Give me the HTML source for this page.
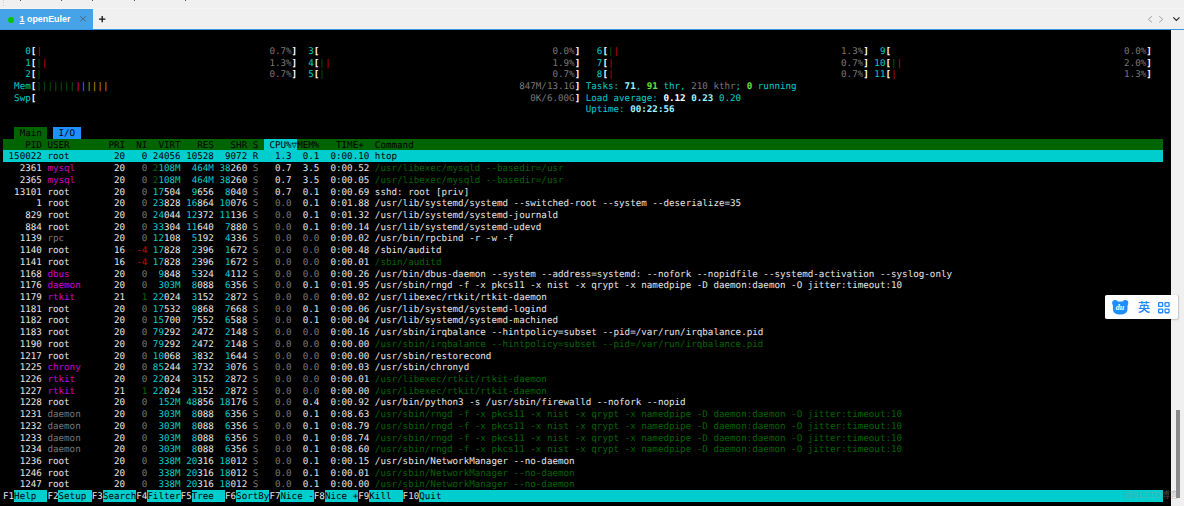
<!DOCTYPE html>
<html lang="en"><head><meta charset="utf-8"><title>htop - openEuler</title>
<style>
html,body{margin:0;padding:0;}
body{width:1184px;height:506px;overflow:hidden;background:#f0f0f0;position:relative;font-family:"Liberation Sans","Noto Sans CJK SC",sans-serif;}
#term{position:absolute;left:0;top:30.3px;width:1171px;height:475.7px;background:#000;overflow:hidden;text-rendering:geometricPrecision;}
#term i,#term b,#term s{position:absolute;display:block;font-style:normal;text-decoration:none;}
#term s{height:11.72px;}
#term i,#term b{font-family:"DejaVu Sans Mono","Liberation Mono",monospace;font-size:9.22px;line-height:11.72px;height:11.72px;white-space:pre;font-weight:normal;color:#e5e5e5;}
#term b{font-weight:bold;}
#term .c0{color:#00cdcd;}
#term .c1{color:#ffffff;}
#term .c2{color:#cd0000;}
#term .c3{color:#777777;}
#term .c4{color:#006400;}
#term .c5{color:#cd00cd;}
#term .c6{color:#1e90ff;}
#term .c7{color:#cd9b00;}
#term .c8{color:#98f5ff;}
#term .c9{color:#66e040;}
#term .c10{color:#000000;}
#topline{position:absolute;left:0;top:7.5px;width:1184px;height:0.9px;background:#f6f5f3;}
#tab{position:absolute;left:0;top:8.6px;width:92.9px;height:20.6px;background:#47a3e8;}
#dot{position:absolute;left:7.7px;top:8px;width:6.4px;height:6.4px;border-radius:50%;background:#08c408;}
#tabtxt{position:absolute;left:19.6px;top:5.4px;font-size:8.9px;line-height:11px;font-weight:bold;color:#fff;white-space:pre;}
#tabtxt u{text-decoration:underline;}
#blueline{position:absolute;left:0;top:29.1px;width:1184px;height:1.2px;background:#3c96df;}
#gutter{position:absolute;left:1171px;top:30.3px;width:13px;height:475.7px;background:#f0f0f0;}
#thumb{position:absolute;left:1176.2px;top:409.7px;width:3.8px;height:88.5px;background:#8c8c8c;}
svg{position:absolute;overflow:visible;}
#ime{position:absolute;left:1104.8px;top:295.1px;width:73.6px;height:23.8px;background:#fff;border-radius:1.8px;box-shadow:0.5px 0.5px 1.5px rgba(0,0,0,0.18);}
#imeying{position:absolute;left:33.2px;top:4.6px;font-size:12.2px;line-height:14px;font-weight:500;color:#1f86ff;font-family:"Noto Sans CJK SC","Liberation Sans",sans-serif;}
#wm{position:absolute;left:1123.4px;top:489.2px;font-size:9px;line-height:13px;color:rgba(150,150,150,0.5);white-space:pre;letter-spacing:-0.1px;font-family:"Liberation Sans","Noto Sans CJK SC",sans-serif;}
#grip{position:absolute;left:2.6px;top:0;width:1px;height:6px;background:repeating-linear-gradient(to bottom,#cfcfcf 0,#cfcfcf 1px,transparent 1px,transparent 2.4px);}
.mk{position:absolute;top:0;width:1.2px;height:0.9px;background:#555;}
</style></head><body>
<div id="topline"></div><div id="grip"></div><div class="mk" style="left:20px"></div><div class="mk" style="left:61px"></div><div class="mk" style="left:92px"></div><div class="mk" style="left:134px"></div><div class="mk" style="left:184.5px"></div>
<div id="tab"><div id="dot"></div><div id="tabtxt"><u>1</u> openEuler</div>
<svg style="left:80px;top:7.6px" width="6.2" height="5.6" viewBox="0 0 6.2 5.6"><path d="M0.2 0.2 L6 5.4 M6 0.2 L0.2 5.4" stroke="#4b5a68" stroke-width="0.8" fill="none"/></svg>
</div>
<svg style="left:99.1px;top:16px" width="6.4" height="6.2" viewBox="0 0 6.4 6.2"><path d="M3.2 0 V6.2 M0 3.1 H6.4" stroke="#111" stroke-width="1.3" fill="none"/></svg>
<svg style="left:1147.5px;top:16px" width="4.2" height="6.6" viewBox="0 0 4.2 6.6"><path d="M4 0.2 L0.4 3.3 L4 6.4" stroke="#9a9a9a" stroke-width="0.9" fill="none"/></svg>
<svg style="left:1159px;top:16px" width="4.2" height="6.6" viewBox="0 0 4.2 6.6"><path d="M0.2 0.2 L3.8 3.3 L0.2 6.4" stroke="#9a9a9a" stroke-width="0.9" fill="none"/></svg>
<svg style="left:1173px;top:17.2px" width="6.8" height="4" viewBox="0 0 6.8 4"><path d="M0.3 0.3 L3.4 3.4 L6.5 0.3" stroke="#2a2a2a" stroke-width="1.2" fill="none"/></svg>
<div id="blueline"></div>
<div id="gutter"></div><div id="thumb"></div>
<div id="term">
<s style="left:14.1px;top:96.73px;width:33.3px;background:#006400"></s>
<s style="left:52.95px;top:96.73px;width:27.75px;background:#1e90ff"></s>
<s style="left:3px;top:108.45px;width:1159.95px;background:#006400"></s>
<s style="left:263.85px;top:108.45px;width:33.3px;background:#00cdcd"></s>
<s style="left:3px;top:120.17px;width:1159.95px;background:#00cdcd"></s>
<s style="left:3px;top:459.95px;width:1159.95px;background:#00cdcd"></s>
<s style="left:3px;top:459.95px;width:11.1px;background:#000000"></s>
<s style="left:47.4px;top:459.95px;width:11.1px;background:#000000"></s>
<s style="left:91.8px;top:459.95px;width:11.1px;background:#000000"></s>
<s style="left:136.2px;top:459.95px;width:11.1px;background:#000000"></s>
<s style="left:180.6px;top:459.95px;width:11.1px;background:#000000"></s>
<s style="left:225px;top:459.95px;width:11.1px;background:#000000"></s>
<s style="left:269.4px;top:459.95px;width:11.1px;background:#000000"></s>
<s style="left:313.8px;top:459.95px;width:11.1px;background:#000000"></s>
<s style="left:358.2px;top:459.95px;width:11.1px;background:#000000"></s>
<s style="left:402.6px;top:459.95px;width:16.65px;background:#000000"></s>
<i class="c0" style="left:14.1px;top:15.62px">  0</i>
<b class="c1" style="left:30.75px;top:15.62px">[</b>
<i class="c2" style="left:36.3px;top:15.62px">|</i>
<i class="c3" style="left:269.4px;top:15.62px">0.7%</i>
<b class="c1" style="left:291.6px;top:15.62px">]</b>
<i class="c0" style="left:14.1px;top:27.33px">  1</i>
<b class="c1" style="left:30.75px;top:27.33px">[</b>
<i class="c4" style="left:36.3px;top:27.33px">|</i>
<i class="c2" style="left:41.85px;top:27.33px">|</i>
<i class="c3" style="left:269.4px;top:27.33px">1.3%</i>
<b class="c1" style="left:291.6px;top:27.33px">]</b>
<i class="c0" style="left:14.1px;top:39.05px">  2</i>
<b class="c1" style="left:30.75px;top:39.05px">[</b>
<i class="c4" style="left:36.3px;top:39.05px">|</i>
<i class="c3" style="left:269.4px;top:39.05px">0.7%</i>
<b class="c1" style="left:291.6px;top:39.05px">]</b>
<i class="c0" style="left:297.15px;top:15.62px">  3</i>
<b class="c1" style="left:313.8px;top:15.62px">[</b>
<i class="c3" style="left:552.45px;top:15.62px">0.0%</i>
<b class="c1" style="left:574.65px;top:15.62px">]</b>
<i class="c0" style="left:297.15px;top:27.33px">  4</i>
<b class="c1" style="left:313.8px;top:27.33px">[</b>
<i class="c4" style="left:319.35px;top:27.33px">|</i>
<i class="c2" style="left:324.9px;top:27.33px">|</i>
<i class="c3" style="left:552.45px;top:27.33px">1.9%</i>
<b class="c1" style="left:574.65px;top:27.33px">]</b>
<i class="c0" style="left:297.15px;top:39.05px">  5</i>
<b class="c1" style="left:313.8px;top:39.05px">[</b>
<i class="c4" style="left:319.35px;top:39.05px">|</i>
<i class="c3" style="left:552.45px;top:39.05px">0.7%</i>
<b class="c1" style="left:574.65px;top:39.05px">]</b>
<i class="c0" style="left:585.75px;top:15.62px">  6</i>
<b class="c1" style="left:602.4px;top:15.62px">[</b>
<i class="c4" style="left:607.95px;top:15.62px">|</i>
<i class="c2" style="left:613.5px;top:15.62px">|</i>
<i class="c3" style="left:841.05px;top:15.62px">1.3%</i>
<b class="c1" style="left:863.25px;top:15.62px">]</b>
<i class="c0" style="left:585.75px;top:27.33px">  7</i>
<b class="c1" style="left:602.4px;top:27.33px">[</b>
<i class="c2" style="left:607.95px;top:27.33px">|</i>
<i class="c3" style="left:841.05px;top:27.33px">0.7%</i>
<b class="c1" style="left:863.25px;top:27.33px">]</b>
<i class="c0" style="left:585.75px;top:39.05px">  8</i>
<b class="c1" style="left:602.4px;top:39.05px">[</b>
<i class="c2" style="left:607.95px;top:39.05px">|</i>
<i class="c3" style="left:841.05px;top:39.05px">0.7%</i>
<b class="c1" style="left:863.25px;top:39.05px">]</b>
<i class="c0" style="left:868.8px;top:15.62px">  9</i>
<b class="c1" style="left:885.45px;top:15.62px">[</b>
<i class="c3" style="left:1124.1px;top:15.62px">0.0%</i>
<b class="c1" style="left:1146.3px;top:15.62px">]</b>
<i class="c0" style="left:868.8px;top:27.33px"> 10</i>
<b class="c1" style="left:885.45px;top:27.33px">[</b>
<i class="c4" style="left:891px;top:27.33px">|</i>
<i class="c2" style="left:896.55px;top:27.33px">|</i>
<i class="c3" style="left:1124.1px;top:27.33px">2.0%</i>
<b class="c1" style="left:1146.3px;top:27.33px">]</b>
<i class="c0" style="left:868.8px;top:39.05px"> 11</i>
<b class="c1" style="left:885.45px;top:39.05px">[</b>
<i class="c2" style="left:891px;top:39.05px">|</i>
<i class="c3" style="left:1124.1px;top:39.05px">1.3%</i>
<b class="c1" style="left:1146.3px;top:39.05px">]</b>
<i class="c0" style="left:14.1px;top:50.77px">Mem</i>
<b class="c1" style="left:30.75px;top:50.77px">[</b>
<i class="c4" style="left:36.3px;top:50.77px">|||||||</i>
<i class="c5" style="left:75.15px;top:50.77px">|</i>
<i class="c6" style="left:80.7px;top:50.77px">|</i>
<i class="c7" style="left:86.25px;top:50.77px">||||</i>
<i class="c3" style="left:519.15px;top:50.77px">847M/13.1G</i>
<b class="c1" style="left:574.65px;top:50.77px">]</b>
<i class="c0" style="left:14.1px;top:62.48px">Swp</i>
<b class="c1" style="left:30.75px;top:62.48px">[</b>
<i class="c3" style="left:530.25px;top:62.48px">0K/6.00G</i>
<b class="c1" style="left:574.65px;top:62.48px">]</b>
<i class="c0" style="left:585.75px;top:50.77px">Tasks: </i>
<b class="c8" style="left:624.6px;top:50.77px">71</b>
<i class="c0" style="left:635.7px;top:50.77px">, </i>
<b class="c9" style="left:646.8px;top:50.77px">91</b>
<i class="c0" style="left:657.9px;top:50.77px"> thr</i>
<i class="c0" style="left:680.1px;top:50.77px">, </i>
<i class="c3" style="left:691.2px;top:50.77px">210 kthr</i>
<i class="c0" style="left:735.6px;top:50.77px">; </i>
<b class="c9" style="left:746.7px;top:50.77px">0</b>
<i class="c0" style="left:752.25px;top:50.77px"> running</i>
<i class="c0" style="left:585.75px;top:62.48px">Load average: </i>
<b class="c1" style="left:663.45px;top:62.48px">0.12 </b>
<b class="c8" style="left:691.2px;top:62.48px">0.23 </b>
<i class="c0" style="left:718.95px;top:62.48px">0.20</i>
<i class="c0" style="left:585.75px;top:74.2px">Uptime: </i>
<b class="c8" style="left:630.15px;top:74.2px">00:22:56</b>
<i class="c10" style="left:14.1px;top:97.63px"> Main </i>
<i class="c10" style="left:52.95px;top:97.63px"> I/O </i>
<i class="c10" style="left:3px;top:109.35px">    PID USER       PRI  NI  VIRT   RES   SHR S </i>
<i class="c10" style="left:263.85px;top:109.35px"> CPU%▽</i>
<i class="c10" style="left:297.15px;top:109.35px">MEM%   TIME+  Command</i>
<i class="c10" style="left:3px;top:121.07px"> 150022</i>
<i class="c10" style="left:47.4px;top:121.07px">root</i>
<i class="c10" style="left:108.45px;top:121.07px"> 20</i>
<i class="c10" style="left:141.75px;top:121.07px">0</i>
<i class="c10" style="left:152.85px;top:121.07px">24056</i>
<i class="c10" style="left:186.15px;top:121.07px">10528</i>
<i class="c10" style="left:225px;top:121.07px">9072</i>
<i class="c10" style="left:252.75px;top:121.07px">R</i>
<i class="c10" style="left:274.95px;top:121.07px">1.3</i>
<i class="c10" style="left:302.7px;top:121.07px">0.1</i>
<i class="c10" style="left:330.45px;top:121.07px">0:00.10</i>
<i class="c10" style="left:374.85px;top:121.07px">htop</i>
<i style="left:3px;top:132.78px">   2361</i>
<i class="c5" style="left:47.4px;top:132.78px">mysql</i>
<i style="left:108.45px;top:132.78px"> 20</i>
<i class="c3" style="left:141.75px;top:132.78px">0</i>
<i class="c4" style="left:152.85px;top:132.78px">2</i>
<i class="c0" style="left:158.4px;top:132.78px">108M</i>
<i class="c0" style="left:191.7px;top:132.78px">464M</i>
<i class="c0" style="left:219.45px;top:132.78px">38</i>
<i style="left:230.55px;top:132.78px">260</i>
<i class="c3" style="left:252.75px;top:132.78px">S</i>
<i style="left:274.95px;top:132.78px">0.7</i>
<i style="left:302.7px;top:132.78px">3.5</i>
<i style="left:330.45px;top:132.78px">0:00.52</i>
<i class="c4" style="left:374.85px;top:132.78px">/usr/libexec/mysqld --basedir=/usr</i>
<i style="left:3px;top:144.5px">   2365</i>
<i class="c5" style="left:47.4px;top:144.5px">mysql</i>
<i style="left:108.45px;top:144.5px"> 20</i>
<i class="c3" style="left:141.75px;top:144.5px">0</i>
<i class="c4" style="left:152.85px;top:144.5px">2</i>
<i class="c0" style="left:158.4px;top:144.5px">108M</i>
<i class="c0" style="left:191.7px;top:144.5px">464M</i>
<i class="c0" style="left:219.45px;top:144.5px">38</i>
<i style="left:230.55px;top:144.5px">260</i>
<i class="c3" style="left:252.75px;top:144.5px">S</i>
<i style="left:274.95px;top:144.5px">0.7</i>
<i style="left:302.7px;top:144.5px">3.5</i>
<i style="left:330.45px;top:144.5px">0:00.05</i>
<i class="c4" style="left:374.85px;top:144.5px">/usr/libexec/mysqld --basedir=/usr</i>
<i style="left:3px;top:156.22px">  13101</i>
<i style="left:47.4px;top:156.22px">root</i>
<i style="left:108.45px;top:156.22px"> 20</i>
<i class="c3" style="left:141.75px;top:156.22px">0</i>
<i class="c0" style="left:152.85px;top:156.22px">17</i>
<i style="left:163.95px;top:156.22px">504</i>
<i class="c0" style="left:191.7px;top:156.22px">9</i>
<i style="left:197.25px;top:156.22px">656</i>
<i class="c0" style="left:225px;top:156.22px">8</i>
<i style="left:230.55px;top:156.22px">040</i>
<i class="c3" style="left:252.75px;top:156.22px">S</i>
<i style="left:274.95px;top:156.22px">0.7</i>
<i style="left:302.7px;top:156.22px">0.1</i>
<i style="left:330.45px;top:156.22px">0:00.69</i>
<i style="left:374.85px;top:156.22px">sshd: root [priv]</i>
<i style="left:3px;top:167.93px">      1</i>
<i style="left:47.4px;top:167.93px">root</i>
<i style="left:108.45px;top:167.93px"> 20</i>
<i class="c3" style="left:141.75px;top:167.93px">0</i>
<i class="c0" style="left:152.85px;top:167.93px">23</i>
<i style="left:163.95px;top:167.93px">828</i>
<i class="c0" style="left:186.15px;top:167.93px">16</i>
<i style="left:197.25px;top:167.93px">864</i>
<i class="c0" style="left:219.45px;top:167.93px">10</i>
<i style="left:230.55px;top:167.93px">076</i>
<i class="c3" style="left:252.75px;top:167.93px">S</i>
<i class="c3" style="left:274.95px;top:167.93px">0.0</i>
<i style="left:302.7px;top:167.93px">0.1</i>
<i style="left:330.45px;top:167.93px">0:01.88</i>
<i style="left:374.85px;top:167.93px">/usr/lib/systemd/systemd --switched-root --system --deserialize=35</i>
<i style="left:3px;top:179.65px">    829</i>
<i style="left:47.4px;top:179.65px">root</i>
<i style="left:108.45px;top:179.65px"> 20</i>
<i class="c3" style="left:141.75px;top:179.65px">0</i>
<i class="c0" style="left:152.85px;top:179.65px">24</i>
<i style="left:163.95px;top:179.65px">044</i>
<i class="c0" style="left:186.15px;top:179.65px">12</i>
<i style="left:197.25px;top:179.65px">372</i>
<i class="c0" style="left:219.45px;top:179.65px">11</i>
<i style="left:230.55px;top:179.65px">136</i>
<i class="c3" style="left:252.75px;top:179.65px">S</i>
<i class="c3" style="left:274.95px;top:179.65px">0.0</i>
<i style="left:302.7px;top:179.65px">0.1</i>
<i style="left:330.45px;top:179.65px">0:01.32</i>
<i style="left:374.85px;top:179.65px">/usr/lib/systemd/systemd-journald</i>
<i style="left:3px;top:191.37px">    884</i>
<i style="left:47.4px;top:191.37px">root</i>
<i style="left:108.45px;top:191.37px"> 20</i>
<i class="c3" style="left:141.75px;top:191.37px">0</i>
<i class="c0" style="left:152.85px;top:191.37px">33</i>
<i style="left:163.95px;top:191.37px">304</i>
<i class="c0" style="left:186.15px;top:191.37px">11</i>
<i style="left:197.25px;top:191.37px">640</i>
<i class="c0" style="left:225px;top:191.37px">7</i>
<i style="left:230.55px;top:191.37px">880</i>
<i class="c3" style="left:252.75px;top:191.37px">S</i>
<i class="c3" style="left:274.95px;top:191.37px">0.0</i>
<i style="left:302.7px;top:191.37px">0.1</i>
<i style="left:330.45px;top:191.37px">0:00.14</i>
<i style="left:374.85px;top:191.37px">/usr/lib/systemd/systemd-udevd</i>
<i style="left:3px;top:203.08px">   1139</i>
<i class="c3" style="left:47.4px;top:203.08px">rpc</i>
<i style="left:108.45px;top:203.08px"> 20</i>
<i class="c3" style="left:141.75px;top:203.08px">0</i>
<i class="c0" style="left:152.85px;top:203.08px">12</i>
<i style="left:163.95px;top:203.08px">108</i>
<i class="c0" style="left:191.7px;top:203.08px">5</i>
<i style="left:197.25px;top:203.08px">192</i>
<i class="c0" style="left:225px;top:203.08px">4</i>
<i style="left:230.55px;top:203.08px">336</i>
<i class="c3" style="left:252.75px;top:203.08px">S</i>
<i class="c3" style="left:274.95px;top:203.08px">0.0</i>
<i class="c3" style="left:302.7px;top:203.08px">0.0</i>
<i style="left:330.45px;top:203.08px">0:00.02</i>
<i style="left:374.85px;top:203.08px">/usr/bin/rpcbind -r -w -f</i>
<i style="left:3px;top:214.8px">   1140</i>
<i style="left:47.4px;top:214.8px">root</i>
<i style="left:108.45px;top:214.8px"> 16</i>
<i class="c2" style="left:136.2px;top:214.8px">-4</i>
<i class="c0" style="left:152.85px;top:214.8px">17</i>
<i style="left:163.95px;top:214.8px">828</i>
<i class="c0" style="left:191.7px;top:214.8px">2</i>
<i style="left:197.25px;top:214.8px">396</i>
<i class="c0" style="left:225px;top:214.8px">1</i>
<i style="left:230.55px;top:214.8px">672</i>
<i class="c3" style="left:252.75px;top:214.8px">S</i>
<i class="c3" style="left:274.95px;top:214.8px">0.0</i>
<i class="c3" style="left:302.7px;top:214.8px">0.0</i>
<i style="left:330.45px;top:214.8px">0:00.48</i>
<i style="left:374.85px;top:214.8px">/sbin/auditd</i>
<i style="left:3px;top:226.52px">   1141</i>
<i style="left:47.4px;top:226.52px">root</i>
<i style="left:108.45px;top:226.52px"> 16</i>
<i class="c2" style="left:136.2px;top:226.52px">-4</i>
<i class="c0" style="left:152.85px;top:226.52px">17</i>
<i style="left:163.95px;top:226.52px">828</i>
<i class="c0" style="left:191.7px;top:226.52px">2</i>
<i style="left:197.25px;top:226.52px">396</i>
<i class="c0" style="left:225px;top:226.52px">1</i>
<i style="left:230.55px;top:226.52px">672</i>
<i class="c3" style="left:252.75px;top:226.52px">S</i>
<i class="c3" style="left:274.95px;top:226.52px">0.0</i>
<i class="c3" style="left:302.7px;top:226.52px">0.0</i>
<i style="left:330.45px;top:226.52px">0:00.01</i>
<i class="c4" style="left:374.85px;top:226.52px">/sbin/auditd</i>
<i style="left:3px;top:238.23px">   1168</i>
<i class="c5" style="left:47.4px;top:238.23px">dbus</i>
<i style="left:108.45px;top:238.23px"> 20</i>
<i class="c3" style="left:141.75px;top:238.23px">0</i>
<i class="c0" style="left:158.4px;top:238.23px">9</i>
<i style="left:163.95px;top:238.23px">848</i>
<i class="c0" style="left:191.7px;top:238.23px">5</i>
<i style="left:197.25px;top:238.23px">324</i>
<i class="c0" style="left:225px;top:238.23px">4</i>
<i style="left:230.55px;top:238.23px">112</i>
<i class="c3" style="left:252.75px;top:238.23px">S</i>
<i class="c3" style="left:274.95px;top:238.23px">0.0</i>
<i class="c3" style="left:302.7px;top:238.23px">0.0</i>
<i style="left:330.45px;top:238.23px">0:00.26</i>
<i style="left:374.85px;top:238.23px">/usr/bin/dbus-daemon --system --address=systemd: --nofork --nopidfile --systemd-activation --syslog-only</i>
<i style="left:3px;top:249.95px">   1176</i>
<i class="c5" style="left:47.4px;top:249.95px">daemon</i>
<i style="left:108.45px;top:249.95px"> 20</i>
<i class="c3" style="left:141.75px;top:249.95px">0</i>
<i class="c0" style="left:158.4px;top:249.95px">303M</i>
<i class="c0" style="left:191.7px;top:249.95px">8</i>
<i style="left:197.25px;top:249.95px">088</i>
<i class="c0" style="left:225px;top:249.95px">6</i>
<i style="left:230.55px;top:249.95px">356</i>
<i class="c3" style="left:252.75px;top:249.95px">S</i>
<i class="c3" style="left:274.95px;top:249.95px">0.0</i>
<i style="left:302.7px;top:249.95px">0.1</i>
<i style="left:330.45px;top:249.95px">0:01.95</i>
<i style="left:374.85px;top:249.95px">/usr/sbin/rngd -f -x pkcs11 -x nist -x qrypt -x namedpipe -D daemon:daemon -O jitter:timeout:10</i>
<i style="left:3px;top:261.67px">   1179</i>
<i class="c5" style="left:47.4px;top:261.67px">rtkit</i>
<i style="left:108.45px;top:261.67px"> 21</i>
<i class="c4" style="left:141.75px;top:261.67px">1</i>
<i class="c0" style="left:152.85px;top:261.67px">22</i>
<i style="left:163.95px;top:261.67px">024</i>
<i class="c0" style="left:191.7px;top:261.67px">3</i>
<i style="left:197.25px;top:261.67px">152</i>
<i class="c0" style="left:225px;top:261.67px">2</i>
<i style="left:230.55px;top:261.67px">872</i>
<i class="c3" style="left:252.75px;top:261.67px">S</i>
<i class="c3" style="left:274.95px;top:261.67px">0.0</i>
<i class="c3" style="left:302.7px;top:261.67px">0.0</i>
<i style="left:330.45px;top:261.67px">0:00.02</i>
<i style="left:374.85px;top:261.67px">/usr/libexec/rtkit/rtkit-daemon</i>
<i style="left:3px;top:273.38px">   1181</i>
<i style="left:47.4px;top:273.38px">root</i>
<i style="left:108.45px;top:273.38px"> 20</i>
<i class="c3" style="left:141.75px;top:273.38px">0</i>
<i class="c0" style="left:152.85px;top:273.38px">17</i>
<i style="left:163.95px;top:273.38px">532</i>
<i class="c0" style="left:191.7px;top:273.38px">9</i>
<i style="left:197.25px;top:273.38px">868</i>
<i class="c0" style="left:225px;top:273.38px">7</i>
<i style="left:230.55px;top:273.38px">668</i>
<i class="c3" style="left:252.75px;top:273.38px">S</i>
<i class="c3" style="left:274.95px;top:273.38px">0.0</i>
<i style="left:302.7px;top:273.38px">0.1</i>
<i style="left:330.45px;top:273.38px">0:00.06</i>
<i style="left:374.85px;top:273.38px">/usr/lib/systemd/systemd-logind</i>
<i style="left:3px;top:285.1px">   1182</i>
<i style="left:47.4px;top:285.1px">root</i>
<i style="left:108.45px;top:285.1px"> 20</i>
<i class="c3" style="left:141.75px;top:285.1px">0</i>
<i class="c0" style="left:152.85px;top:285.1px">15</i>
<i style="left:163.95px;top:285.1px">700</i>
<i class="c0" style="left:191.7px;top:285.1px">7</i>
<i style="left:197.25px;top:285.1px">552</i>
<i class="c0" style="left:225px;top:285.1px">6</i>
<i style="left:230.55px;top:285.1px">588</i>
<i class="c3" style="left:252.75px;top:285.1px">S</i>
<i class="c3" style="left:274.95px;top:285.1px">0.0</i>
<i style="left:302.7px;top:285.1px">0.1</i>
<i style="left:330.45px;top:285.1px">0:00.04</i>
<i style="left:374.85px;top:285.1px">/usr/lib/systemd/systemd-machined</i>
<i style="left:3px;top:296.82px">   1183</i>
<i style="left:47.4px;top:296.82px">root</i>
<i style="left:108.45px;top:296.82px"> 20</i>
<i class="c3" style="left:141.75px;top:296.82px">0</i>
<i class="c0" style="left:152.85px;top:296.82px">79</i>
<i style="left:163.95px;top:296.82px">292</i>
<i class="c0" style="left:191.7px;top:296.82px">2</i>
<i style="left:197.25px;top:296.82px">472</i>
<i class="c0" style="left:225px;top:296.82px">2</i>
<i style="left:230.55px;top:296.82px">148</i>
<i class="c3" style="left:252.75px;top:296.82px">S</i>
<i class="c3" style="left:274.95px;top:296.82px">0.0</i>
<i class="c3" style="left:302.7px;top:296.82px">0.0</i>
<i style="left:330.45px;top:296.82px">0:00.16</i>
<i style="left:374.85px;top:296.82px">/usr/sbin/irqbalance --hintpolicy=subset --pid=/var/run/irqbalance.pid</i>
<i style="left:3px;top:308.53px">   1190</i>
<i style="left:47.4px;top:308.53px">root</i>
<i style="left:108.45px;top:308.53px"> 20</i>
<i class="c3" style="left:141.75px;top:308.53px">0</i>
<i class="c0" style="left:152.85px;top:308.53px">79</i>
<i style="left:163.95px;top:308.53px">292</i>
<i class="c0" style="left:191.7px;top:308.53px">2</i>
<i style="left:197.25px;top:308.53px">472</i>
<i class="c0" style="left:225px;top:308.53px">2</i>
<i style="left:230.55px;top:308.53px">148</i>
<i class="c3" style="left:252.75px;top:308.53px">S</i>
<i class="c3" style="left:274.95px;top:308.53px">0.0</i>
<i class="c3" style="left:302.7px;top:308.53px">0.0</i>
<i style="left:330.45px;top:308.53px">0:00.00</i>
<i class="c4" style="left:374.85px;top:308.53px">/usr/sbin/irqbalance --hintpolicy=subset --pid=/var/run/irqbalance.pid</i>
<i style="left:3px;top:320.25px">   1217</i>
<i style="left:47.4px;top:320.25px">root</i>
<i style="left:108.45px;top:320.25px"> 20</i>
<i class="c3" style="left:141.75px;top:320.25px">0</i>
<i class="c0" style="left:152.85px;top:320.25px">10</i>
<i style="left:163.95px;top:320.25px">068</i>
<i class="c0" style="left:191.7px;top:320.25px">3</i>
<i style="left:197.25px;top:320.25px">832</i>
<i class="c0" style="left:225px;top:320.25px">1</i>
<i style="left:230.55px;top:320.25px">644</i>
<i class="c3" style="left:252.75px;top:320.25px">S</i>
<i class="c3" style="left:274.95px;top:320.25px">0.0</i>
<i class="c3" style="left:302.7px;top:320.25px">0.0</i>
<i style="left:330.45px;top:320.25px">0:00.00</i>
<i style="left:374.85px;top:320.25px">/usr/sbin/restorecond</i>
<i style="left:3px;top:331.97px">   1225</i>
<i class="c5" style="left:47.4px;top:331.97px">chrony</i>
<i style="left:108.45px;top:331.97px"> 20</i>
<i class="c3" style="left:141.75px;top:331.97px">0</i>
<i class="c0" style="left:152.85px;top:331.97px">85</i>
<i style="left:163.95px;top:331.97px">244</i>
<i class="c0" style="left:191.7px;top:331.97px">3</i>
<i style="left:197.25px;top:331.97px">732</i>
<i class="c0" style="left:225px;top:331.97px">3</i>
<i style="left:230.55px;top:331.97px">076</i>
<i class="c3" style="left:252.75px;top:331.97px">S</i>
<i class="c3" style="left:274.95px;top:331.97px">0.0</i>
<i class="c3" style="left:302.7px;top:331.97px">0.0</i>
<i style="left:330.45px;top:331.97px">0:00.03</i>
<i style="left:374.85px;top:331.97px">/usr/sbin/chronyd</i>
<i style="left:3px;top:343.68px">   1226</i>
<i class="c5" style="left:47.4px;top:343.68px">rtkit</i>
<i style="left:108.45px;top:343.68px"> 20</i>
<i class="c3" style="left:141.75px;top:343.68px">0</i>
<i class="c0" style="left:152.85px;top:343.68px">22</i>
<i style="left:163.95px;top:343.68px">024</i>
<i class="c0" style="left:191.7px;top:343.68px">3</i>
<i style="left:197.25px;top:343.68px">152</i>
<i class="c0" style="left:225px;top:343.68px">2</i>
<i style="left:230.55px;top:343.68px">872</i>
<i class="c3" style="left:252.75px;top:343.68px">S</i>
<i class="c3" style="left:274.95px;top:343.68px">0.0</i>
<i class="c3" style="left:302.7px;top:343.68px">0.0</i>
<i style="left:330.45px;top:343.68px">0:00.01</i>
<i class="c4" style="left:374.85px;top:343.68px">/usr/libexec/rtkit/rtkit-daemon</i>
<i style="left:3px;top:355.4px">   1227</i>
<i class="c5" style="left:47.4px;top:355.4px">rtkit</i>
<i style="left:108.45px;top:355.4px"> 21</i>
<i class="c4" style="left:141.75px;top:355.4px">1</i>
<i class="c0" style="left:152.85px;top:355.4px">22</i>
<i style="left:163.95px;top:355.4px">024</i>
<i class="c0" style="left:191.7px;top:355.4px">3</i>
<i style="left:197.25px;top:355.4px">152</i>
<i class="c0" style="left:225px;top:355.4px">2</i>
<i style="left:230.55px;top:355.4px">872</i>
<i class="c3" style="left:252.75px;top:355.4px">S</i>
<i class="c3" style="left:274.95px;top:355.4px">0.0</i>
<i class="c3" style="left:302.7px;top:355.4px">0.0</i>
<i style="left:330.45px;top:355.4px">0:00.00</i>
<i class="c4" style="left:374.85px;top:355.4px">/usr/libexec/rtkit/rtkit-daemon</i>
<i style="left:3px;top:367.12px">   1228</i>
<i style="left:47.4px;top:367.12px">root</i>
<i style="left:108.45px;top:367.12px"> 20</i>
<i class="c3" style="left:141.75px;top:367.12px">0</i>
<i class="c0" style="left:158.4px;top:367.12px">152M</i>
<i class="c0" style="left:186.15px;top:367.12px">48</i>
<i style="left:197.25px;top:367.12px">856</i>
<i class="c0" style="left:219.45px;top:367.12px">18</i>
<i style="left:230.55px;top:367.12px">176</i>
<i class="c3" style="left:252.75px;top:367.12px">S</i>
<i class="c3" style="left:274.95px;top:367.12px">0.0</i>
<i style="left:302.7px;top:367.12px">0.4</i>
<i style="left:330.45px;top:367.12px">0:00.92</i>
<i style="left:374.85px;top:367.12px">/usr/bin/python3 -s /usr/sbin/firewalld --nofork --nopid</i>
<i style="left:3px;top:378.83px">   1231</i>
<i class="c3" style="left:47.4px;top:378.83px">daemon</i>
<i style="left:108.45px;top:378.83px"> 20</i>
<i class="c3" style="left:141.75px;top:378.83px">0</i>
<i class="c0" style="left:158.4px;top:378.83px">303M</i>
<i class="c0" style="left:191.7px;top:378.83px">8</i>
<i style="left:197.25px;top:378.83px">088</i>
<i class="c0" style="left:225px;top:378.83px">6</i>
<i style="left:230.55px;top:378.83px">356</i>
<i class="c3" style="left:252.75px;top:378.83px">S</i>
<i class="c3" style="left:274.95px;top:378.83px">0.0</i>
<i style="left:302.7px;top:378.83px">0.1</i>
<i style="left:330.45px;top:378.83px">0:08.63</i>
<i class="c4" style="left:374.85px;top:378.83px">/usr/sbin/rngd -f -x pkcs11 -x nist -x qrypt -x namedpipe -D daemon:daemon -O jitter:timeout:10</i>
<i style="left:3px;top:390.55px">   1232</i>
<i class="c3" style="left:47.4px;top:390.55px">daemon</i>
<i style="left:108.45px;top:390.55px"> 20</i>
<i class="c3" style="left:141.75px;top:390.55px">0</i>
<i class="c0" style="left:158.4px;top:390.55px">303M</i>
<i class="c0" style="left:191.7px;top:390.55px">8</i>
<i style="left:197.25px;top:390.55px">088</i>
<i class="c0" style="left:225px;top:390.55px">6</i>
<i style="left:230.55px;top:390.55px">356</i>
<i class="c3" style="left:252.75px;top:390.55px">S</i>
<i class="c3" style="left:274.95px;top:390.55px">0.0</i>
<i style="left:302.7px;top:390.55px">0.1</i>
<i style="left:330.45px;top:390.55px">0:08.79</i>
<i class="c4" style="left:374.85px;top:390.55px">/usr/sbin/rngd -f -x pkcs11 -x nist -x qrypt -x namedpipe -D daemon:daemon -O jitter:timeout:10</i>
<i style="left:3px;top:402.27px">   1233</i>
<i class="c3" style="left:47.4px;top:402.27px">daemon</i>
<i style="left:108.45px;top:402.27px"> 20</i>
<i class="c3" style="left:141.75px;top:402.27px">0</i>
<i class="c0" style="left:158.4px;top:402.27px">303M</i>
<i class="c0" style="left:191.7px;top:402.27px">8</i>
<i style="left:197.25px;top:402.27px">088</i>
<i class="c0" style="left:225px;top:402.27px">6</i>
<i style="left:230.55px;top:402.27px">356</i>
<i class="c3" style="left:252.75px;top:402.27px">S</i>
<i class="c3" style="left:274.95px;top:402.27px">0.0</i>
<i style="left:302.7px;top:402.27px">0.1</i>
<i style="left:330.45px;top:402.27px">0:08.74</i>
<i class="c4" style="left:374.85px;top:402.27px">/usr/sbin/rngd -f -x pkcs11 -x nist -x qrypt -x namedpipe -D daemon:daemon -O jitter:timeout:10</i>
<i style="left:3px;top:413.98px">   1234</i>
<i class="c3" style="left:47.4px;top:413.98px">daemon</i>
<i style="left:108.45px;top:413.98px"> 20</i>
<i class="c3" style="left:141.75px;top:413.98px">0</i>
<i class="c0" style="left:158.4px;top:413.98px">303M</i>
<i class="c0" style="left:191.7px;top:413.98px">8</i>
<i style="left:197.25px;top:413.98px">088</i>
<i class="c0" style="left:225px;top:413.98px">6</i>
<i style="left:230.55px;top:413.98px">356</i>
<i class="c3" style="left:252.75px;top:413.98px">S</i>
<i class="c3" style="left:274.95px;top:413.98px">0.0</i>
<i style="left:302.7px;top:413.98px">0.1</i>
<i style="left:330.45px;top:413.98px">0:08.60</i>
<i class="c4" style="left:374.85px;top:413.98px">/usr/sbin/rngd -f -x pkcs11 -x nist -x qrypt -x namedpipe -D daemon:daemon -O jitter:timeout:10</i>
<i style="left:3px;top:425.7px">   1236</i>
<i style="left:47.4px;top:425.7px">root</i>
<i style="left:108.45px;top:425.7px"> 20</i>
<i class="c3" style="left:141.75px;top:425.7px">0</i>
<i class="c0" style="left:158.4px;top:425.7px">338M</i>
<i class="c0" style="left:186.15px;top:425.7px">20</i>
<i style="left:197.25px;top:425.7px">316</i>
<i class="c0" style="left:219.45px;top:425.7px">18</i>
<i style="left:230.55px;top:425.7px">012</i>
<i class="c3" style="left:252.75px;top:425.7px">S</i>
<i class="c3" style="left:274.95px;top:425.7px">0.0</i>
<i style="left:302.7px;top:425.7px">0.1</i>
<i style="left:330.45px;top:425.7px">0:00.15</i>
<i style="left:374.85px;top:425.7px">/usr/sbin/NetworkManager --no-daemon</i>
<i style="left:3px;top:437.42px">   1246</i>
<i style="left:47.4px;top:437.42px">root</i>
<i style="left:108.45px;top:437.42px"> 20</i>
<i class="c3" style="left:141.75px;top:437.42px">0</i>
<i class="c0" style="left:158.4px;top:437.42px">338M</i>
<i class="c0" style="left:186.15px;top:437.42px">20</i>
<i style="left:197.25px;top:437.42px">316</i>
<i class="c0" style="left:219.45px;top:437.42px">18</i>
<i style="left:230.55px;top:437.42px">012</i>
<i class="c3" style="left:252.75px;top:437.42px">S</i>
<i class="c3" style="left:274.95px;top:437.42px">0.0</i>
<i style="left:302.7px;top:437.42px">0.1</i>
<i style="left:330.45px;top:437.42px">0:00.01</i>
<i class="c4" style="left:374.85px;top:437.42px">/usr/sbin/NetworkManager --no-daemon</i>
<i style="left:3px;top:449.13px">   1247</i>
<i style="left:47.4px;top:449.13px">root</i>
<i style="left:108.45px;top:449.13px"> 20</i>
<i class="c3" style="left:141.75px;top:449.13px">0</i>
<i class="c0" style="left:158.4px;top:449.13px">338M</i>
<i class="c0" style="left:186.15px;top:449.13px">20</i>
<i style="left:197.25px;top:449.13px">316</i>
<i class="c0" style="left:219.45px;top:449.13px">18</i>
<i style="left:230.55px;top:449.13px">012</i>
<i class="c3" style="left:252.75px;top:449.13px">S</i>
<i class="c3" style="left:274.95px;top:449.13px">0.0</i>
<i style="left:302.7px;top:449.13px">0.1</i>
<i style="left:330.45px;top:449.13px">0:00.00</i>
<i class="c4" style="left:374.85px;top:449.13px">/usr/sbin/NetworkManager --no-daemon</i>
<i style="left:3px;top:460.85px">F1</i>
<i class="c10" style="left:14.1px;top:460.85px">Help  </i>
<i style="left:47.4px;top:460.85px">F2</i>
<i class="c10" style="left:58.5px;top:460.85px">Setup </i>
<i style="left:91.8px;top:460.85px">F3</i>
<i class="c10" style="left:102.9px;top:460.85px">Search</i>
<i style="left:136.2px;top:460.85px">F4</i>
<i class="c10" style="left:147.3px;top:460.85px">Filter</i>
<i style="left:180.6px;top:460.85px">F5</i>
<i class="c10" style="left:191.7px;top:460.85px">Tree  </i>
<i style="left:225px;top:460.85px">F6</i>
<i class="c10" style="left:236.1px;top:460.85px">SortBy</i>
<i style="left:269.4px;top:460.85px">F7</i>
<i class="c10" style="left:280.5px;top:460.85px">Nice -</i>
<i style="left:313.8px;top:460.85px">F8</i>
<i class="c10" style="left:324.9px;top:460.85px">Nice +</i>
<i style="left:358.2px;top:460.85px">F9</i>
<i class="c10" style="left:369.3px;top:460.85px">Kill  </i>
<i style="left:402.6px;top:460.85px">F10</i>
<i class="c10" style="left:419.25px;top:460.85px">Quit</i>
</div>
<div id="ime">
<svg style="left:6.9px;top:4.8px" width="16.4" height="14.8" viewBox="0 0 16.4 14.8"><circle cx="3.1" cy="3.1" r="3" fill="#1f8fff"/><circle cx="13.3" cy="3.1" r="3" fill="#1f8fff"/><path d="M0.9 6 C0.9 2.6 3.6 1.4 8.2 1.4 C12.8 1.4 15.5 2.6 15.5 6 L15.5 9 C15.5 12.8 12.6 14.6 8.2 14.6 C3.8 14.6 0.9 12.8 0.9 9 Z" fill="#1f8fff"/><text x="8" y="10.4" text-anchor="middle" style="font-family:'Liberation Serif',serif;font-style:italic;font-weight:bold;font-size:8px" fill="#fff">du</text></svg>
<div id="imeying">英</div>
<svg style="left:53.7px;top:6.6px" width="11.7" height="11.4" viewBox="0 0 11.7 11.4"><g fill="none" stroke="#1f86ff" stroke-width="1.3"><rect x="0.65" y="0.65" width="4" height="3.7" rx="0.5"/><rect x="7.05" y="0.65" width="4" height="3.7" rx="0.5"/><rect x="0.65" y="7.05" width="4" height="3.7" rx="0.5"/><rect x="7.05" y="7.05" width="4" height="3.7" rx="0.5"/></g></svg>
</div>
<div id="wm">@51CTO博客</div>
</body></html>
